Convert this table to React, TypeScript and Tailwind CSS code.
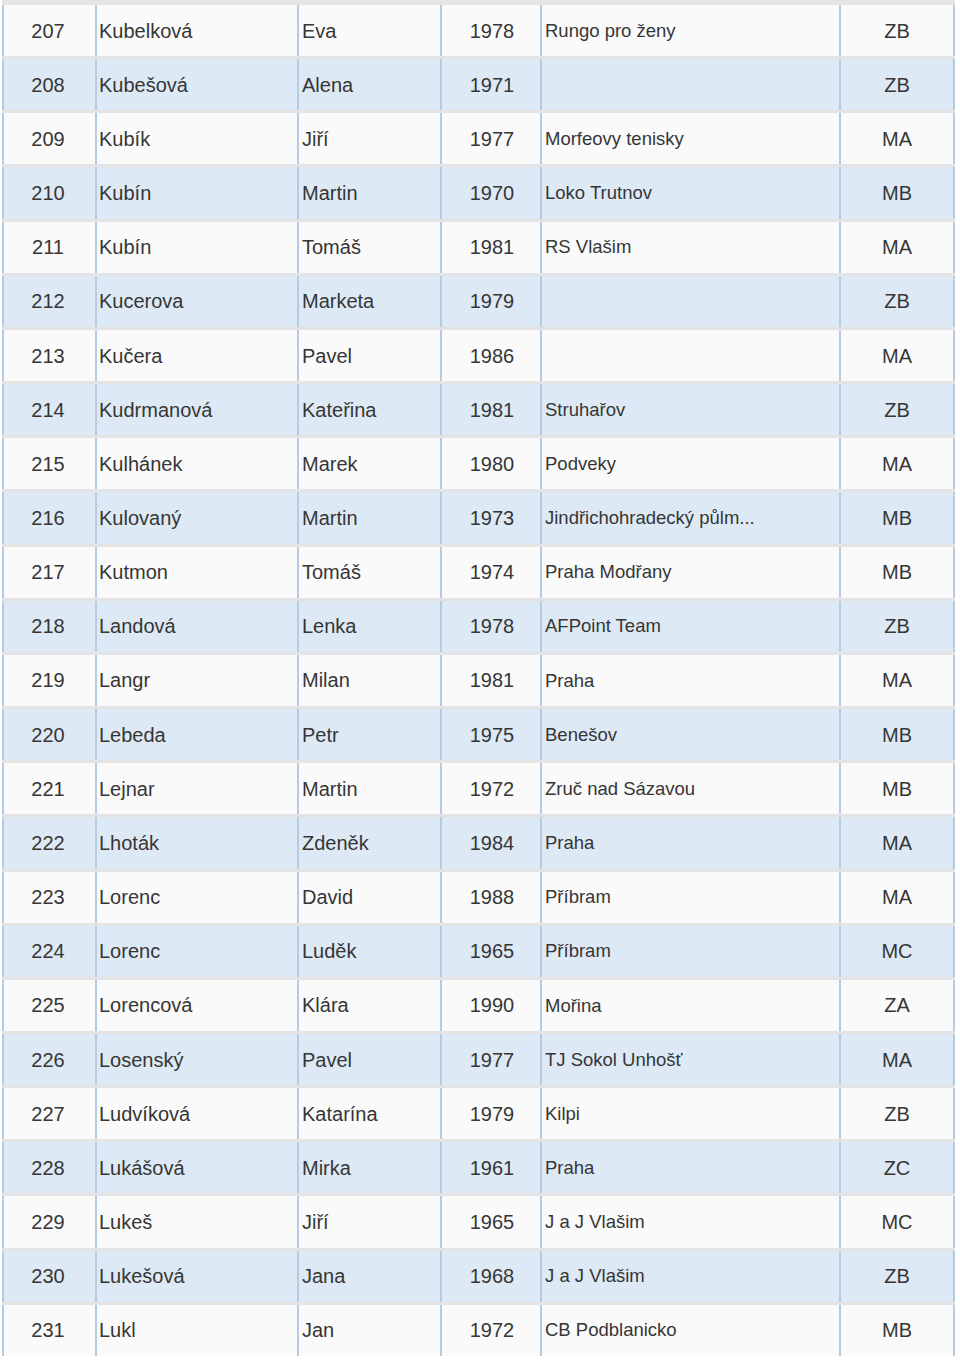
import React from "react";

const rows = [
  { no: 207, last: "Kubelková", first: "Eva", year: 1978, club: "Rungo pro ženy", cat: "ZB" },
  { no: 208, last: "Kubešová", first: "Alena", year: 1971, club: "", cat: "ZB" },
  { no: 209, last: "Kubík", first: "Jiří", year: 1977, club: "Morfeovy tenisky", cat: "MA" },
  { no: 210, last: "Kubín", first: "Martin", year: 1970, club: "Loko Trutnov", cat: "MB" },
  { no: 211, last: "Kubín", first: "Tomáš", year: 1981, club: "RS Vlašim", cat: "MA" },
  { no: 212, last: "Kucerova", first: "Marketa", year: 1979, club: "", cat: "ZB" },
  { no: 213, last: "Kučera", first: "Pavel", year: 1986, club: "", cat: "MA" },
  { no: 214, last: "Kudrmanová", first: "Kateřina", year: 1981, club: "Struhařov", cat: "ZB" },
  { no: 215, last: "Kulhánek", first: "Marek", year: 1980, club: "Podveky", cat: "MA" },
  { no: 216, last: "Kulovaný", first: "Martin", year: 1973, club: "Jindřichohradecký půlm...", cat: "MB" },
  { no: 217, last: "Kutmon", first: "Tomáš", year: 1974, club: "Praha Modřany", cat: "MB" },
  { no: 218, last: "Landová", first: "Lenka", year: 1978, club: "AFPoint Team", cat: "ZB" },
  { no: 219, last: "Langr", first: "Milan", year: 1981, club: "Praha", cat: "MA" },
  { no: 220, last: "Lebeda", first: "Petr", year: 1975, club: "Benešov", cat: "MB" },
  { no: 221, last: "Lejnar", first: "Martin", year: 1972, club: "Zruč nad Sázavou", cat: "MB" },
  { no: 222, last: "Lhoták", first: "Zdeněk", year: 1984, club: "Praha", cat: "MA" },
  { no: 223, last: "Lorenc", first: "David", year: 1988, club: "Příbram", cat: "MA" },
  { no: 224, last: "Lorenc", first: "Luděk", year: 1965, club: "Příbram", cat: "MC" },
  { no: 225, last: "Lorencová", first: "Klára", year: 1990, club: "Mořina", cat: "ZA" },
  { no: 226, last: "Losenský", first: "Pavel", year: 1977, club: "TJ Sokol Unhošť", cat: "MA" },
  { no: 227, last: "Ludvíková", first: "Katarína", year: 1979, club: "Kilpi", cat: "ZB" },
  { no: 228, last: "Lukášová", first: "Mirka", year: 1961, club: "Praha", cat: "ZC" },
  { no: 229, last: "Lukeš", first: "Jiří", year: 1965, club: "J a J Vlašim", cat: "MC" },
  { no: 230, last: "Lukešová", first: "Jana", year: 1968, club: "J a J Vlašim", cat: "ZB" },
  { no: 231, last: "Lukl", first: "Jan", year: 1972, club: "CB Podblanicko", cat: "MB" },
];

const cell = "h-full flex items-center border-l-2 border-[#b4cbe2]";

export default function App() {
  return (
    <div
      className="w-[960px] h-[1364px] bg-white text-[#363636]"
      style={{ fontFamily: '"Liberation Sans", Arial, sans-serif' }}
    >
      <div className="ml-[2px] w-[953px] border-t-[2px] border-[#e4e4e4]">
        {rows.map((r, i) => (
          <div
            key={r.no}
            className={`h-[54.16px] border-t-[3px] border-[#e4e4e4] ${
              i % 2 === 0 ? "bg-[#fafafa]" : "bg-[#dde9f5]"
            }`}
          >
            <div className="flex h-full text-[20px]">
              <div className={`${cell} w-[93px] justify-center pr-[3px]`}>{r.no}</div>
              <div className={`${cell} w-[202px] pl-[2px]`}>{r.last}</div>
              <div className={`${cell} w-[143px] pl-[3px]`}>{r.first}</div>
              <div className={`${cell} w-[100px] justify-center pl-[2px]`}>{r.year}</div>
              <div className={`${cell} w-[299px] pl-[3px] text-[18.5px]`}>{r.club}</div>
              <div className={`${cell} w-[116px] justify-center border-r-2`}>{r.cat}</div>
            </div>
          </div>
        ))}
      </div>
    </div>
  );
}
